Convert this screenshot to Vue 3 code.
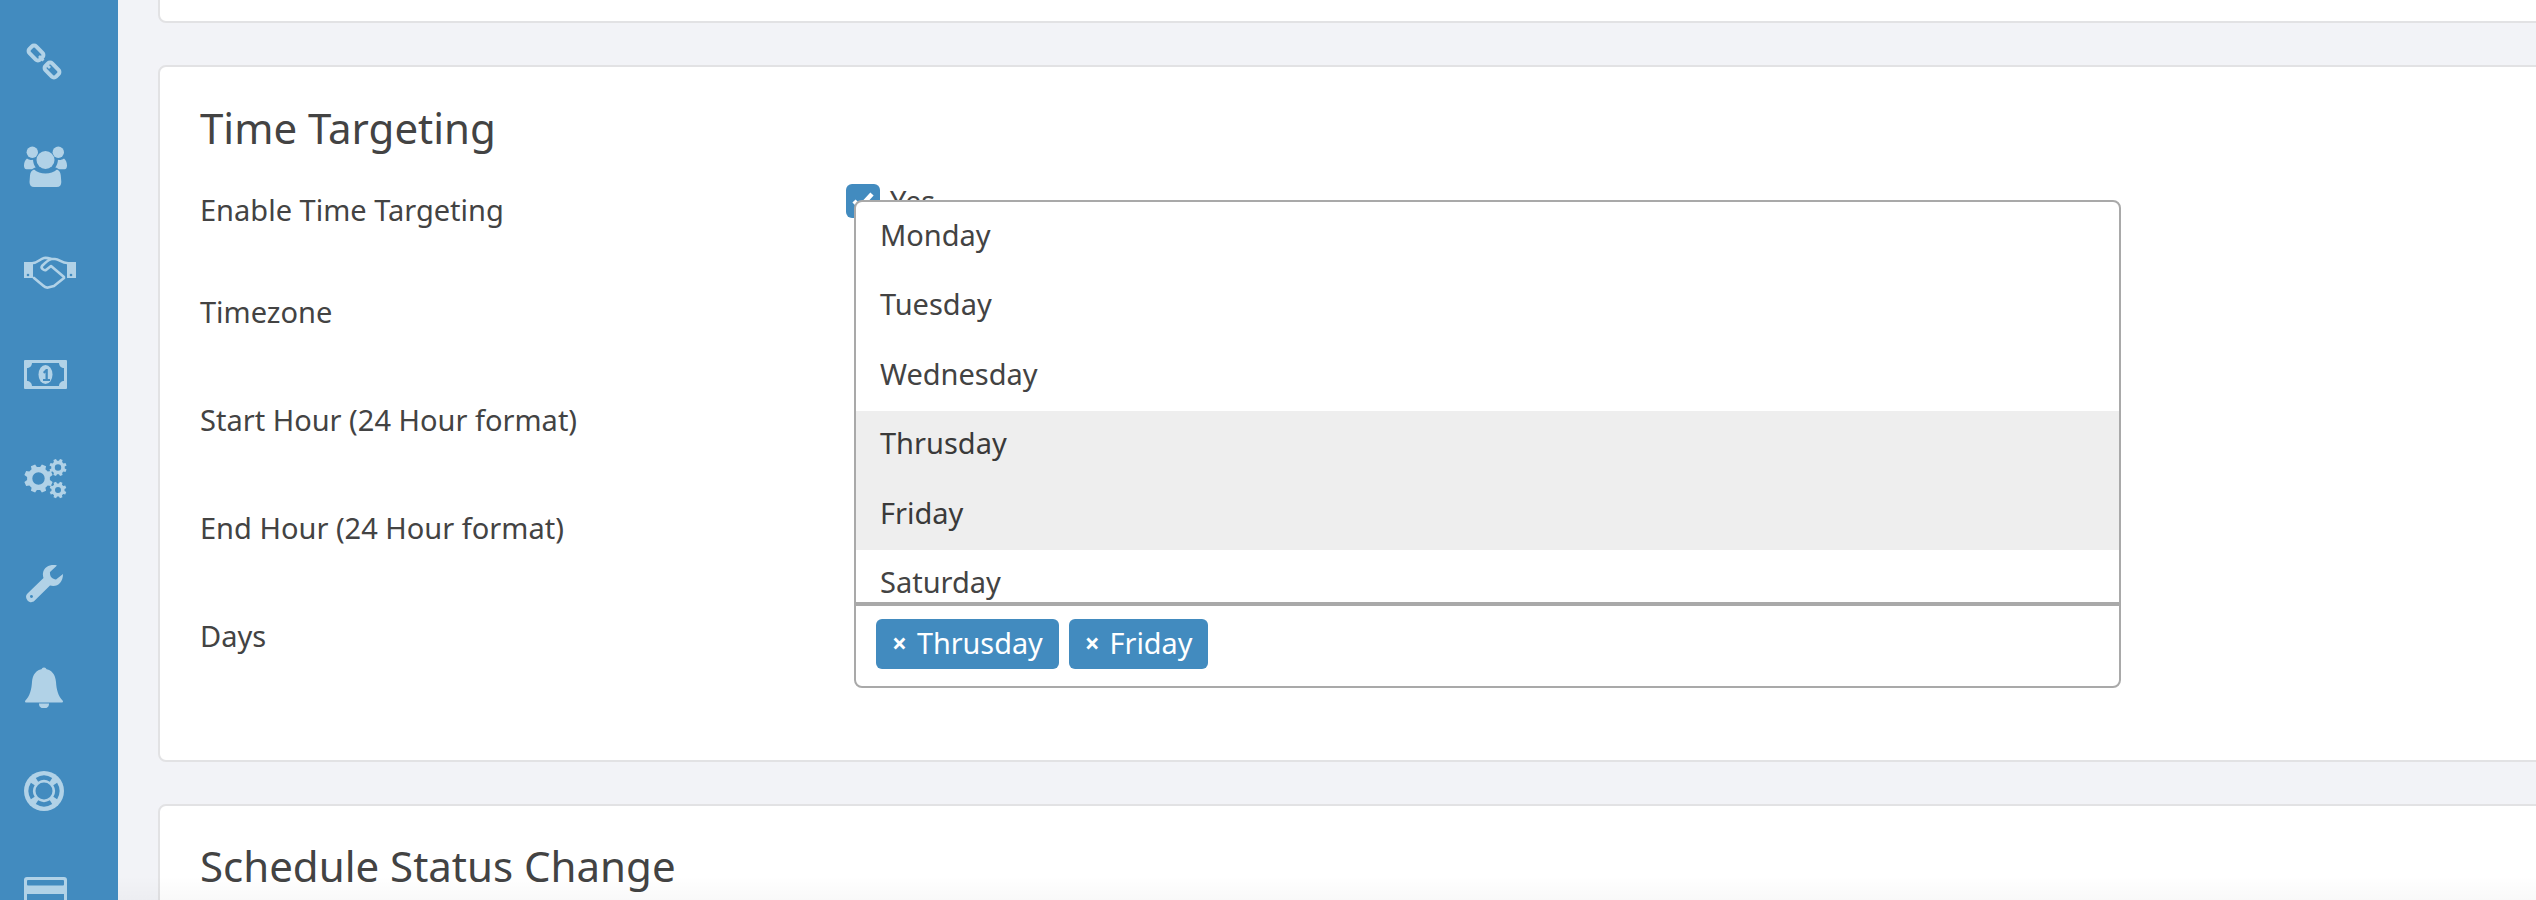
<script setup>
const labels = [
  { text: 'Enable Time Targeting', h: 102 },
  { text: 'Timezone', h: 108 },
  { text: 'Start Hour (24 Hour format)', h: 108 },
  { text: 'End Hour (24 Hour format)', h: 108 },
  { text: 'Days', h: 108 },
]
const days = ['Monday', 'Tuesday', 'Wednesday', 'Thrusday', 'Friday', 'Saturday']
const selected = ['Thrusday', 'Friday']

function gear(cx, cy, R, root, hole, n) {
  const pt = (r, a) => `${(cx + r * Math.cos(a)).toFixed(2)} ${(cy + r * Math.sin(a)).toFixed(2)}`
  const step = (Math.PI * 2) / n
  let d = ''
  for (let i = 0; i < n; i++) {
    const a = i * step + step / 2
    d += `${i ? 'L' : 'M'}${pt(root, a - step * 0.32)}L${pt(R, a - step * 0.2)}L${pt(R, a + step * 0.2)}L${pt(root, a + step * 0.32)}`
  }
  d += `ZM${cx - hole} ${cy}a${hole} ${hole} 0 1 0 ${hole * 2} 0a${hole} ${hole} 0 1 0 ${-hole * 2} 0Z`
  return d
}
const gears = [gear(14.5, 19.5, 14.5, 11.5, 6.2, 8), gear(34, 8.5, 8.8, 6.8, 3.2, 8), gear(34, 31, 8.5, 6.6, 3, 8)]
const lifeArc = 'M11.8 6.9A15.5 15.5 0 0 1 28.2 6.9L25.83 10.67A11 11 0 0 0 14.17 10.67Z'
</script>

<template>
  <div class="page">
    <aside class="sidebar">
      <svg class="ico i-link" viewBox="0 0 38 38"><g fill="none" stroke="#b1d2e7" stroke-width="4"><rect x="2.500" y="5.250" width="15" height="9.500" rx="3" transform="rotate(45 10 10)"/><rect x="18.500" y="22.250" width="15" height="9.500" rx="3" transform="rotate(45 26 27)"/></g><path d="M13 13l4.500 4.500M20 21l4 4" stroke="#b1d2e7" stroke-width="2.800" fill="none"/></svg>
      <svg class="ico i-users" viewBox="0 0 43 41"><g fill="#b1d2e7"><circle cx="8.300" cy="6.300" r="5.700"/><circle cx="34.300" cy="6.300" r="5.700"/><path d="M3 12.500c1.800 1.300 4 1.800 6 1.300.3 3 1 5.500 2.700 7.700-1.600.4-2.700 1-3.500 1.800H2.500C.8 23 0 22 0 19.500c0-3 1.300-5.800 3-7zM40 12.500c-1.800 1.300-4 1.800-6 1.300-.3 3-1 5.500-2.700 7.700 1.600.4 2.700 1 3.500 1.800h5.700c1.700-.3 2.500-1.300 2.500-3.800 0-3-1.300-5.800-3-7z"/><circle cx="21.500" cy="14" r="9"/><path d="M10 23.500c3 2.800 7 4 11.500 4s8.500-1.200 11.500-4c2.500 1 3.500 3 3.800 6l.5 6.500c0 3-1.500 5-4.500 5H10c-3 0-4.500-2-4.500-5l.5-6.500c.3-3 1.300-5 4-6z"/></g></svg>
      <svg class="ico i-hand" viewBox="0 0 52 33"><g fill="#b1d2e7"><path d="M0 6h9v16H0zM43 6h9v16h-9z"/></g><g fill="none" stroke="#b1d2e7" stroke-width="2.600" stroke-linejoin="round" stroke-linecap="round"><path d="M9 7c4 0 7-4 11-5 3-.6 5 .3 7 1h4c4 0 7 4 12 4M10 22l9 7.500c2 2 4 2.500 6 1.800l5-1.300 10-8"/><path d="M27 3c-3 1-7 5-9 7-1.500 2 2 5 4 4l5-4 13 11"/></g><circle cx="4" cy="19" r="1.300" fill="#428bbf"/><circle cx="47" cy="19" r="1.300" fill="#428bbf"/></svg>
      <svg class="ico i-money" viewBox="0 0 43 29"><rect width="43" height="29" rx="1" fill="#b1d2e7"/><path d="M8 3h27c0 3 2.500 5 5 5v13c-2.500 0-5 2-5 5H8c0-3-2.500-5-5-5V8c2.500 0 5-2 5-5z" fill="#428bbf"/><ellipse cx="21.500" cy="14.500" rx="7" ry="9.500" fill="#b1d2e7"/><path d="M19 12l3-3h1.800v10H26v2h-7v-2h2.500v-6.500l-1.300 1.200z" fill="#428bbf"/></svg>
      <svg class="ico i-cogs" viewBox="0 0 43 40"><path v-for="d in gears" :key="d" :d="d" fill="#b1d2e7" fill-rule="evenodd"/></svg>
      <svg class="ico i-wrench" viewBox="0 0 37 38"><path fill="#b1d2e7" fill-rule="evenodd" d="M31 .5C25 -1 18 1.500 17 8c-.3 2 0 3.500.5 5L1.500 28.500c-2 2-2 4.500 0 7 2 2.300 5 2.300 7 .3L24 20.500c7 2 13-2.500 13-11.500l-7 5.500c-4-.3-6.500-3-6-7.500zM5.500 30a1.500 1.500 0 1 1-.01 3 1.500 1.500 0 0 1 .01-3z"/></svg>
      <svg class="ico i-bell" viewBox="0 0 38 41"><g fill="#b1d2e7"><circle cx="19" cy="3" r="2.500"/><path d="M19 2c8 0 11.500 6 12 13 .4 7 2 14 7 19 0 1-.4 1.500-1.500 1.500h-35C.4 35.500 0 35 0 34c5-5 6.600-12 7-19 .5-7 4-13 12-13z"/><path d="M14 36.500h10c.3 3-2 5-5 5s-5.300-2-5-5z"/></g></svg>
      <svg class="ico i-life" viewBox="0 0 40 40"><circle cx="20" cy="20" r="20" fill="#b1d2e7"/><circle cx="20" cy="20" r="8.500" fill="#428bbf"/><path v-for="a in [0, 90, 180, 270]" :key="a" :d="lifeArc" :transform="`rotate(${a} 20 20)`" fill="#428bbf"/></svg>
      <svg class="ico i-card" viewBox="0 0 43 30"><rect width="43" height="30" rx="3" fill="#b1d2e7"/><rect x="3" y="3" width="37" height="5.500" rx="1" fill="#428bbf"/><rect x="3" y="17" width="37" height="13" fill="#428bbf"/></svg>
    </aside>

    <main class="content">
      <section class="card card-top"></section>

      <section class="card card-time">
        <h2 class="title">Time Targeting</h2>
        <div class="form">
          <div class="labels">
            <div v-for="l in labels" :key="l.text" class="label" :style="{ height: l.h + 'px' }">{{ l.text }}</div>
          </div>
          <div class="control">
            <div class="check">
              <span class="box">
                <svg viewBox="0 0 34 34" width="34" height="34"><path d="M8 17l6 6 12-13" fill="none" stroke="#fff" stroke-width="4.500"/></svg>
              </span>
              <span class="yes">Yes</span>
            </div>
            <div class="multi">
              <ul class="list">
                <li v-for="d in days" :key="d" :class="{ sel: selected.includes(d) }">{{ d }}</li>
              </ul>
              <div class="tags">
                <span v-for="s in selected" :key="s" class="tag"><span class="x">×</span>{{ s }}</span>
              </div>
            </div>
          </div>
        </div>
      </section>

      <section class="card card-status">
        <h2 class="title">Schedule Status Change</h2>
      </section>
      <div class="fade"></div>
    </main>
  </div>
</template>

<style>
html, body { margin: 0; height: 900px; overflow: hidden; background: #f2f3f7; }
</style>

<style scoped>
.page {
  display: flex;
  width: 2536px;
  height: 900px;
  overflow: hidden;
  font-family: "Noto Sans", "Open Sans", sans-serif;
  color: #434343;
  background: #f2f3f7;
}
.sidebar {
  width: 118px;
  flex: none;
  height: 900px;
  background: #428bbf;
  display: flex;
  flex-direction: column;
  padding-left: 24px;
  box-sizing: border-box;
  overflow: hidden;
}
.ico { display: block; flex: none; }
.i-link { width: 38px; height: 38px; margin: 43px 0 0 2px; }
.i-users { width: 43px; height: 41px; margin-top: 65px; }
.i-hand { width: 52px; height: 33px; margin-top: 69px; }
.i-money { width: 43px; height: 29px; margin-top: 71px; }
.i-cogs { width: 43px; height: 40px; margin-top: 70px; }
.i-wrench { width: 37px; height: 38px; margin: 66px 0 0 2px; }
.i-bell { width: 38px; height: 41px; margin: 64px 0 0 1px; }
.i-life { width: 40px; height: 40px; margin-top: 63px; }
.i-card { width: 43px; height: 30px; margin-top: 66px; }

.content {
  position: relative;
  flex: none;
  width: 2500px;
  height: 900px;
  padding-left: 40px;
  box-sizing: border-box;
  display: flex;
  flex-direction: column;
  gap: 42px;
  overflow: hidden;
}
.fade {
  position: absolute;
  left: 0;
  right: 0;
  bottom: 0;
  height: 24px;
  background: linear-gradient(rgba(0, 0, 0, 0), rgba(0, 0, 0, 0.025));
}
.card {
  background: #fff;
  border: 2px solid #e2e2e4;
  border-radius: 8px;
  box-sizing: border-box;
  flex: none;
}
.card-top { height: 80px; margin-top: -57px; }
.card-time { height: 697px; padding: 0 0 0 40px; }
.card-status { height: 200px; padding-left: 40px; }
.title {
  margin: 0;
  font-weight: 400;
  font-size: 42px;
  line-height: 56px;
  color: #434343;
}
.card-time .title { margin-top: 33px; }
.card-status .title { margin-top: 32px; }
.form { display: flex; margin-top: 34px; }
.labels { width: 646px; flex: none; }
.label {
  font-size: 29px;
  line-height: 40px;
  color: #434343;
}
.control { position: relative; flex: none; width: 1270px; }
.check {
  display: flex;
  align-items: flex-start;
  margin-top: -6px;
  gap: 10px;
}
.box {
  width: 34px;
  height: 34px;
  background: #428bbf;
  border-radius: 6px;
  display: block;
}
.box svg { display: block; }
.yes { font-size: 29px; line-height: 34px; }
.multi {
  position: absolute;
  left: 8px;
  top: 10px;
  width: 1267px;
  height: 488px;
  box-sizing: border-box;
  background: #fff;
  border: 2px solid #a9a9a9;
  border-radius: 8px;
  overflow: hidden;
}
.list {
  list-style: none;
  margin: 0;
  padding: 1px 0 0;
  height: 399px;
  overflow: hidden;
  border-bottom: 4px solid #a9a9a9;
  box-sizing: content-box;
}
.list li {
  height: 69.4px;
  line-height: 63px;
  padding-left: 24px;
  font-size: 29px;
  color: #434343;
}
.list li.sel { background: #eeeeee; color: #3a3a3a; }
.tags { display: flex; gap: 10px; padding: 13px 0 0 20px; }
.tag {
  display: flex;
  align-items: center;
  height: 50px;
  padding: 0 16px 3px;
  background: #428bbf;
  border-radius: 6px;
  color: #fff;
  font-size: 28.8px;
  box-sizing: border-box;
}
.x { font-size: 26px; font-weight: 700; margin-right: 10px; line-height: 1; }
</style>
